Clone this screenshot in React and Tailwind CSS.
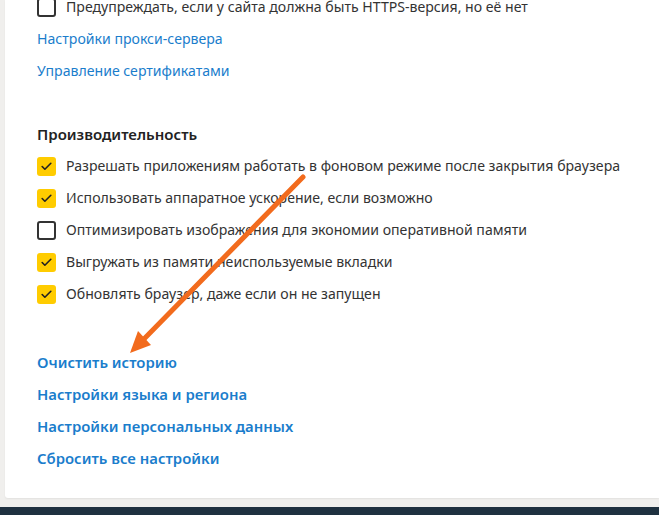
import { Check } from "lucide-react";

const font = { fontFamily: '"Noto Sans", "Open Sans", sans-serif' };

function Box({ checked }) {
  return checked ? (
    <span className="w-[19px] h-[19px] rounded-[3px] bg-[#ffcc00] flex items-center justify-center shrink-0">
      <Check size={13} strokeWidth={3} className="text-[#222]" />
    </span>
  ) : (
    <span className="w-[19px] h-[19px] rounded-[3px] border-2 border-[#333] bg-white shrink-0" />
  );
}

function Row({ checked, text }) {
  return (
    <div className="h-[32px] flex items-center gap-[10px]">
      <Box checked={checked} />
      <span className="text-[14.1px] text-[#333] whitespace-nowrap">{text}</span>
    </div>
  );
}

function Link({ text, bold }) {
  return (
    <div className="h-[32px] flex items-center">
      <span
        className={
          "text-[#1a7dcc] whitespace-nowrap " +
          (bold ? "font-semibold text-[14.9px]" : "text-[14.1px]")
        }
      >
        {text}
      </span>
    </div>
  );
}

const perf = [
  [true, "Разрешать приложениям работать в фоновом режиме после закрытия браузера"],
  [true, "Использовать аппаратное ускорение, если возможно"],
  [false, "Оптимизировать изображения для экономии оперативной памяти"],
  [true, "Выгружать из памяти неиспользуемые вкладки"],
  [true, "Обновлять браузер, даже если он не запущен"],
];

export default function App() {
  return (
    <div className="relative w-[659px] h-[515px] overflow-hidden bg-[#f0efed] flex flex-col" style={font}>
      <div className="flex-1 ml-[5px] bg-white overflow-hidden rounded-bl-[3px] shadow-[0_1px_2px_rgba(0,0,0,0.06)]">
        <div className="mt-[-9px] pl-[32px] flex flex-col">
          <Row checked={false} text="Предупреждать, если у сайта должна быть HTTPS-версия, но её нет" />
          <Link text="Настройки прокси-сервера" />
          <Link text="Управление сертификатами" />
          <div className="h-[31px]" />
          <div className="h-[32px] flex items-center">
            <span className="text-[15px] font-semibold text-[#222]">Производительность</span>
          </div>
          {perf.map(([c, t]) => (
            <Row key={t} checked={c} text={t} />
          ))}
          <div className="h-[36px]" />
          <Link bold text="Очистить историю" />
          <Link bold text="Настройки языка и региона" />
          <Link bold text="Настройки персональных данных" />
          <Link bold text="Сбросить все настройки" />
        </div>
      </div>
      <div className="h-[9px]" />
      <div className="h-[8px] bg-[#1f3140]" />

      <svg className="absolute inset-0 pointer-events-none" width="659" height="515">
        <line x1="303" y1="177" x2="143" y2="340" stroke="#f26b1d" strokeWidth="5" strokeLinecap="round" />
        <polygon points="130,353 151,345 138,331" fill="#f26b1d" />
      </svg>
    </div>
  );
}
